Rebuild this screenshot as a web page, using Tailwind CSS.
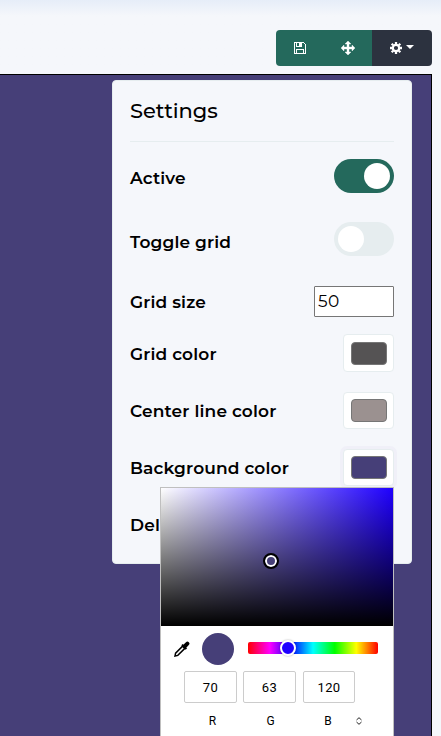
<!DOCTYPE html>
<html lang="en">
<head>
<meta charset="utf-8">
<title>Settings</title>
<script src="https://cdn.jsdelivr.net/npm/@tailwindcss/browser@4"></script>
</head>
<body class="h-[736px] w-[441px] overflow-hidden bg-[#f5f7fb] font-['Montserrat','Inter',sans-serif] text-black">
<div class="relative flex h-[736px] flex-col">
  <header class="flex h-[74px] shrink-0 items-start justify-end bg-linear-to-b from-[#e6edf8] to-[#f5f7fb] to-[16px] pt-[30px] pr-[9px]">
    <div class="flex h-9 overflow-hidden rounded-[4px] text-white">
      <button class="flex w-12 items-center justify-center bg-[#24695c]" aria-label="Save">
        <svg class="h-3 w-3" viewBox="0 0 12 12" fill="none" stroke="currentColor" shape-rendering="crispEdges"><path d="M.5.5h9l2 2v9H.5zM2.5 11V7.5h7V11M2.5 1v3.5h5V1"/><path d="M5 1h2v3H5z" fill="currentColor" stroke="none"/></svg>
      </button>
      <button class="flex w-12 items-center justify-center bg-[#24695c]" aria-label="Move">
        <svg class="h-[14px] w-[14px]" viewBox="0 0 14 14" fill="currentColor"><path d="M7 0l3 3H8v3h3V4l3 3-3 3V8H8v3h2l-3 3-3-3h2V8H3v2L0 7l3-3v2h3V3H4z" stroke="currentColor" stroke-width=".4"/></svg>
      </button>
      <button class="flex w-[60px] items-center justify-center gap-1 bg-[#2c323f]" aria-label="Settings menu">
        <svg class="h-3 w-3" viewBox="0 0 12 12" fill="none" stroke="currentColor"><circle cx="6" cy="6" r="3.2" stroke-width="2.2"/><path d="M6 0v2M6 10v2M0 6h2M10 6h2M1.7 1.7l1.5 1.5M8.8 8.8l1.5 1.5M1.7 10.3l1.5-1.5M8.8 3.2l1.5-1.5" stroke-width="2.3"/></svg>
        <svg class="mb-[3px] h-1 w-2" viewBox="0 0 8 4" fill="currentColor"><path d="M0 0h8L4 4z"/></svg>
      </button>
    </div>
  </header>

  <main class="mr-[9px] flex flex-1 items-start justify-end border-t border-r border-black bg-[#463f78] pt-[5px] pr-[19px]">
    <section class="h-[484px] w-[300px] rounded-[4px] border border-[#e6edef] bg-[#f5f7fb] px-[17px]">
      <h1 class="flex h-[61px] items-center border-b border-[#e6edef] text-[21px] font-medium tracking-[-0.05px]">Settings</h1>
      <div class="pt-[10px] text-[17px] font-semibold tracking-[0.15px]">
        <div class="flex h-12 items-center justify-between">
          <span class="pt-[5px]">Active</span>
          <span class="flex h-[34px] w-[60px] justify-end rounded-full bg-[#24695c] p-1"><i class="h-[26px] w-[26px] rounded-full bg-white"></i></span>
        </div>
        <div class="flex h-[78px] items-center justify-between">
          <span class="pt-[7px]">Toggle grid</span>
          <span class="flex h-[34px] w-[60px] rounded-full bg-[#e6edef] p-1"><i class="h-[26px] w-[26px] rounded-full bg-white"></i></span>
        </div>
        <div class="flex h-[47px] items-center justify-between">
          <span class="pt-[2px]">Grid size</span>
          <input class="h-[31px] w-[80px] rounded-[1px] border border-[#767676] bg-white px-[3px] pb-px text-[17px] font-normal tracking-[0.4px]" value="50">
        </div>
        <div class="flex h-[56px] items-center justify-between">
          <span class="pt-[3px]">Grid color</span>
          <span class="flex h-[38px] w-[51px] items-center justify-center rounded-[4px] border border-[#e6edef] bg-white"><i class="h-[23px] w-9 rounded-[4px] border border-[#767676] bg-[#555354]"></i></span>
        </div>
        <div class="flex h-[58px] items-center justify-between">
          <span class="pt-[3px]">Center line color</span>
          <span class="flex h-[37px] w-[51px] items-center justify-center rounded-[4px] border border-[#e6edef] bg-white"><i class="h-[23px] w-9 rounded-[4px] border border-[#767676] bg-[#9b9190]"></i></span>
        </div>
        <div class="flex h-[57px] items-center justify-between">
          <span class="pt-[2px]">Background color</span>
          <span class="flex h-[37px] w-[51px] items-center justify-center rounded-[4px] border border-[#e6edef] bg-white shadow-[0_0_0_3px_#f0f0f8]"><i class="h-[23px] w-9 rounded-[4px] border border-[#767676] bg-[#463f78]"></i></span>
        </div>
        <div class="flex h-[57px] items-center"><span class="pt-[2px]">Delete</span></div>
      </div>
    </section>
  </main>

  <div class="absolute top-[487px] left-[160px] h-[249px] w-[234px] overflow-hidden border border-b-0 border-[#bfbfbf] bg-white font-[Roboto,sans-serif]">
    <div class="relative h-[138px] bg-[linear-gradient(to_top,#000,transparent),linear-gradient(to_right,#fff,#1f00ff)]">
      <span class="absolute top-[65px] left-[102px] h-4 w-4 rounded-full border-2 border-black bg-[#463f78] shadow-[inset_0_0_0_2px_#fff]"></span>
    </div>
    <div class="flex h-[45px] items-center pr-[15px] pl-[13px]">
      <svg class="h-4 w-4" viewBox="0 0 16 16" fill="none" stroke="#000"><path d="M9.4 4.4L1.6 12.2 1 15l2.8-.6 7.8-7.8" stroke-width="1.5"/><path d="M8 3.6L12.4 8" stroke-width="2"/><path d="M10.5 5.5L13.4 2.6" stroke-width="4" stroke-linecap="round"/></svg>
      <span class="ml-3 h-8 w-8 rounded-full bg-[#463f78]"></span>
      <div class="relative mb-[2px] ml-[14px] h-3 w-[130px] rounded-[2px] bg-[linear-gradient(to_right,#f00,#f0f_16.7%,#00f_33.3%,#0ff_50%,#0f0_66.7%,#ff0_83.3%,#f00)]">
        <span class="absolute -top-[2px] left-[32px] h-4 w-4 rounded-full border-2 border-white bg-[#1f00ff] shadow-[0_0_2px_#0005]"></span>
      </div>
    </div>
    <div class="flex pl-[23px] text-center text-[13px] leading-[31px] tracking-[0.4px]">
      <span class="h-8 w-[53px] rounded-[2px] border border-[#ccc]">70</span>
      <span class="ml-[6px] h-8 w-[53px] rounded-[2px] border border-[#ccc]">63</span>
      <span class="ml-[7px] h-8 w-[52px] rounded-[2px] border border-[#ccc]">120</span>
    </div>
    <div class="flex h-[34px] items-center gap-[6px] pt-px pl-[23px] text-center text-[12px]">
      <span class="w-[57px]">R</span><span class="w-[47px]">G</span><span class="w-[56px]">B</span>
      <svg class="-ml-[6px] h-2 w-[6px]" viewBox="0 0 6 8" fill="none" stroke="#222"><path d="M.5 3L3 .7 5.5 3M.5 5L3 7.3 5.5 5"/></svg>
    </div>
  </div>
</div>
</body>
</html>
